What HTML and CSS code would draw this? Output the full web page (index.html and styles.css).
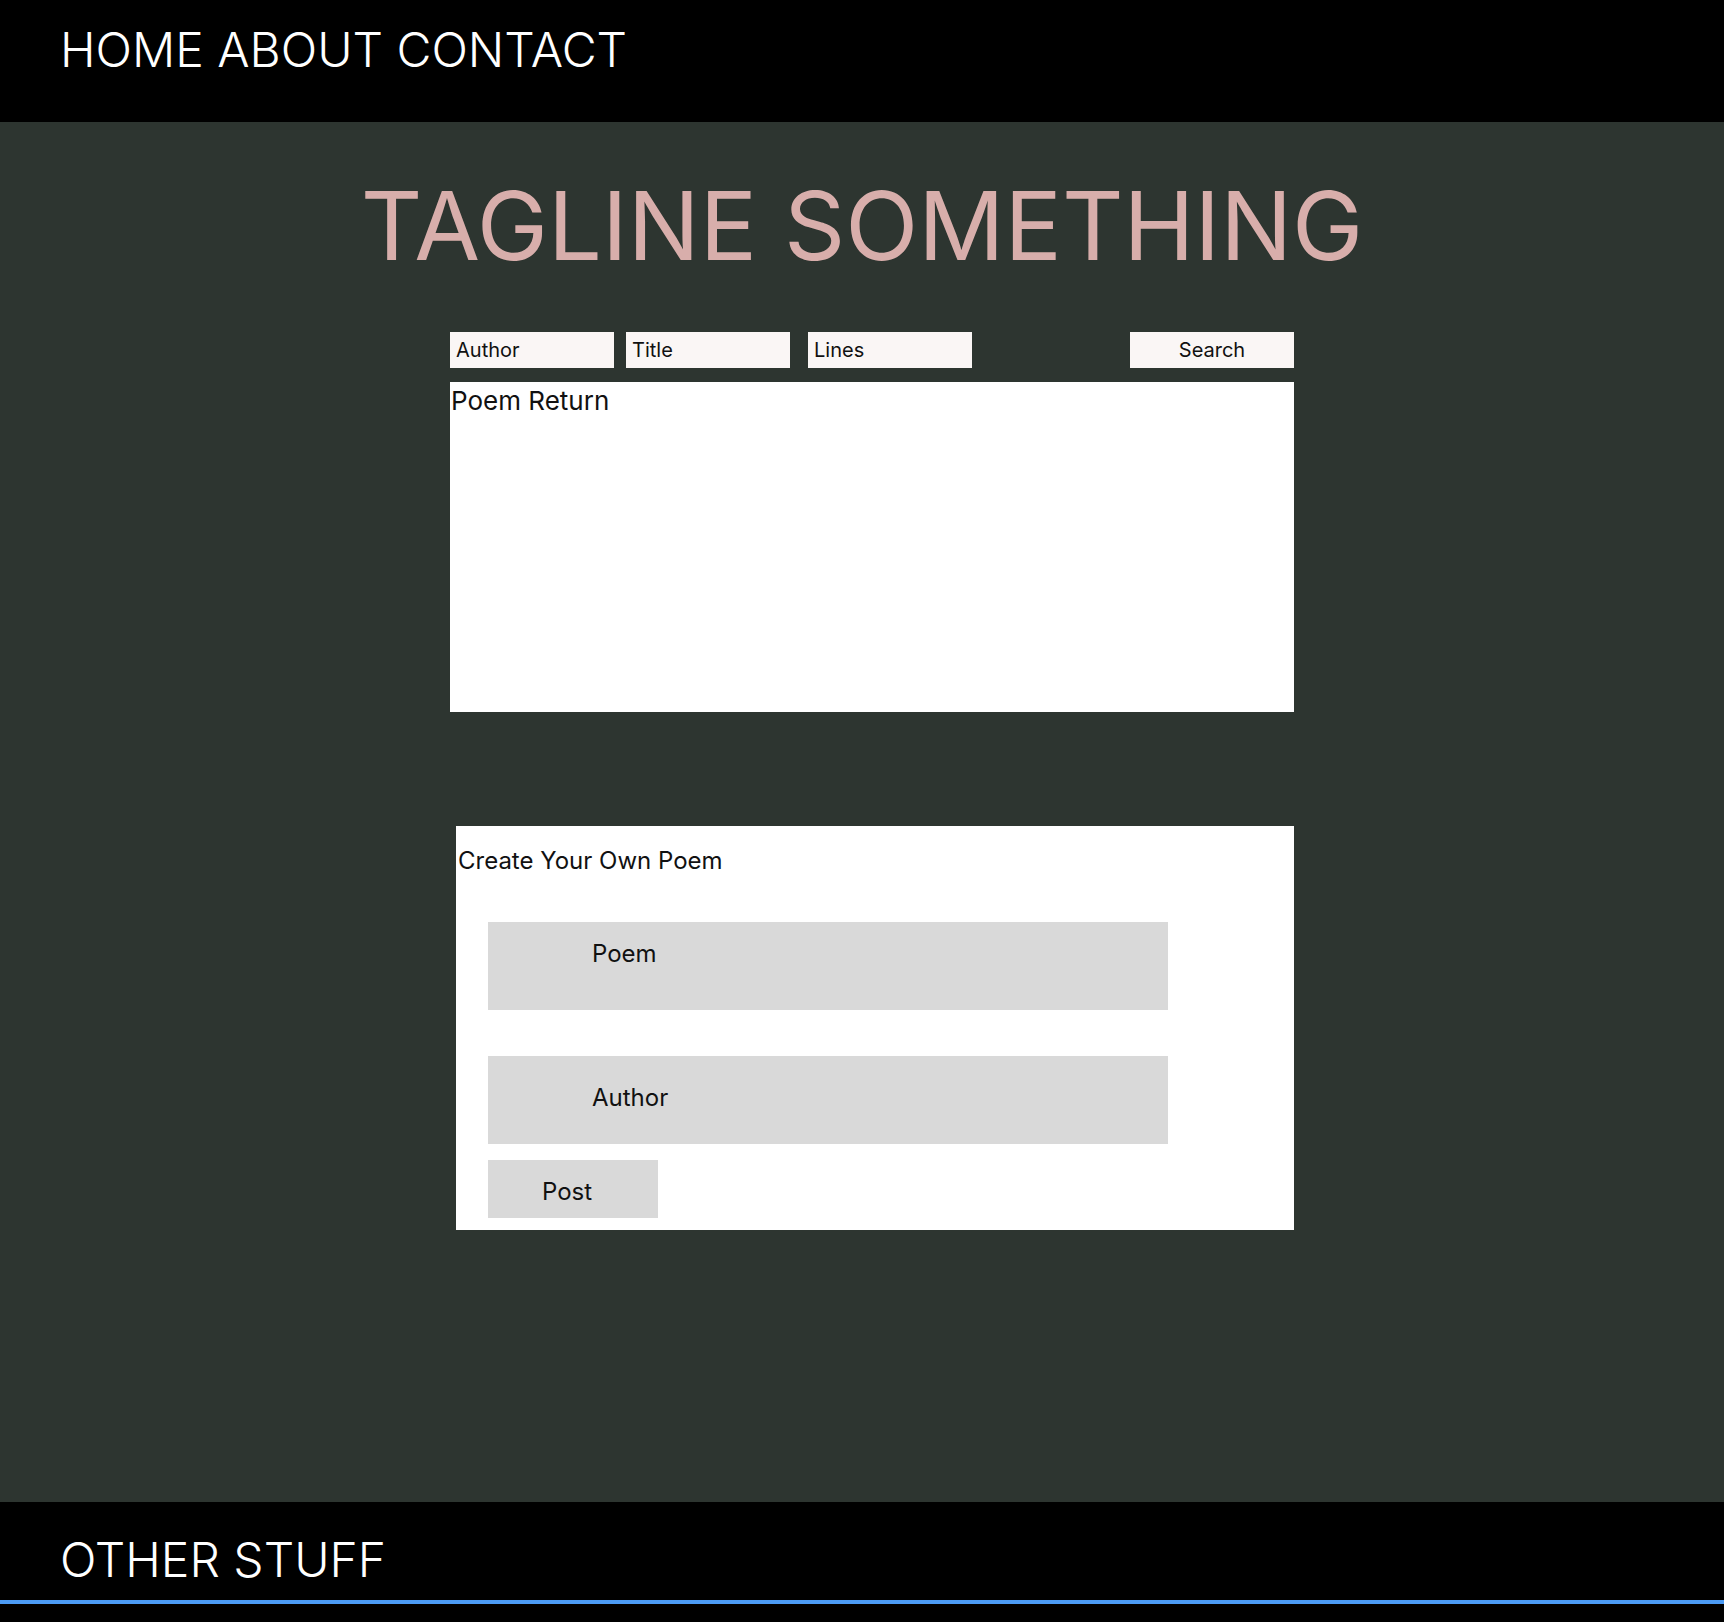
FILE: index.html
```html
<!DOCTYPE html>
<html lang="en">
<head>
<meta charset="utf-8">
<title>Poems</title>
<link rel="stylesheet" href="styles.css">
</head>
<body>
<header class="site-header">
  <nav class="nav">HOME ABOUT CONTACT</nav>
</header>
<main class="main">
  <h1 class="tagline">TAGLINE SOMETHING</h1>
  <section class="search-area">
    <div class="search-row">
      <div class="field field-author">Author</div>
      <div class="field field-title">Title</div>
      <div class="field field-lines">Lines</div>
      <div class="field field-search">Search</div>
    </div>
    <div class="poem-return">Poem Return</div>
  </section>
  <section class="create">
    <div class="create-title">Create Your Own Poem</div>
    <div class="create-field create-poem">Poem</div>
    <div class="create-field create-author">Author</div>
    <div class="post-btn">Post</div>
  </section>
</main>
<footer class="site-footer">
  <div class="footer-text">OTHER STUFF</div>
  <div class="footer-rule"></div>
</footer>
</body>
</html>
```

FILE: styles.css
```css
* { box-sizing: border-box; }
html, body { margin: 0; padding: 0; }
body {
  font-family: Inter, "Noto Sans", sans-serif;
  background: #2d3530;
  color: #111;
}
.site-header {
  height: 122px;
  background: #000;
  padding: 21px 0 0 60px;
}
.nav {
  color: #fff;
  font-size: 48px;
  line-height: 58px;
  font-weight: 300;
}
.main {
  height: 1380px;
  padding-top: 45px;
  display: flex;
  flex-direction: column;
}
.tagline {
  margin: 0;
  text-align: center;
  font-size: 95.5px;
  line-height: 116px;
  font-weight: 400;
  color: #d8aeab;
}
.search-area {
  width: 844px;
  margin: 49px 0 0 calc(50% - 412px);
}
.search-row {
  display: flex;
  height: 36px;
}
.field {
  width: 164px;
  height: 36px;
  background: #faf6f5;
  font-size: 20px;
  line-height: 36px;
  padding-left: 6px;
  color: #111;
}
.field-title { margin-left: 12px; }
.field-lines { margin-left: 18px; }
.field-search {
  margin-left: auto;
  padding-left: 0;
  text-align: center;
}
.poem-return {
  margin-top: 14px;
  height: 330px;
  background: #fff;
  font-size: 26px;
  line-height: normal;
  padding: 3px 0 0 1px;
}
.create {
  width: 838px;
  height: 404px;
  margin: 114px 0 0 calc(50% - 406px);
  background: #fff;
  padding: 20px 0 0 32px;
}
.create-title {
  font-size: 24px;
  line-height: 29px;
  margin-left: -30px;
}
.create-field {
  width: 680px;
  height: 88px;
  background: #d9d9d9;
  font-size: 24px;
  line-height: 29px;
  padding-left: 104px;
}
.create-poem {
  margin-top: 47px;
  padding-top: 17px;
}
.create-author {
  margin-top: 46px;
  padding-top: 27px;
}
.post-btn {
  width: 170px;
  height: 58px;
  margin-top: 16px;
  background: #d9d9d9;
  font-size: 24px;
  line-height: 29px;
  padding: 17px 0 0 54px;
}
.site-footer {
  height: 120px;
  background: #000;
  padding-top: 29px;
}
.footer-text {
  color: #fff;
  font-size: 48px;
  line-height: 58px;
  font-weight: 300;
  padding-left: 60px;
}
.footer-rule {
  margin-top: 11px;
  height: 4px;
  background: #4b9bf5;
}
```
